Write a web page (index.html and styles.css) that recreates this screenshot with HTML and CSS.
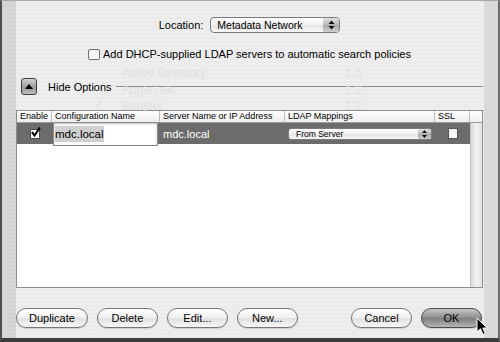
FILE: index.html
```html
<!DOCTYPE html>
<html lang="en">
<head>
    <meta charset="UTF-8">
    <title>LDAP Options</title>
    <link rel="stylesheet" href="styles.css">
</head>
<body>
    <div class="window">
        <!-- faint list of the window behind the sheet -->
        <div class="ghost">
            <span class="ghost-item g1">Active Directory</span><span class="ghost-ver g1">1.5</span>
            <span class="ghost-item g2">AppleTalk</span><span class="ghost-ver g2">1.2</span>
            <span class="ghost-check">&#10003;</span>
            <span class="ghost-item g3">Bonjour</span><span class="ghost-ver g3">1.2</span>
        </div>

        <div class="location-row">
            <span class="label">Location:</span>
            <div class="popup location-popup">
                <span class="popup-text">Metadata Network</span>
                <span class="popup-arrows">
                    <svg width="7" height="10" viewBox="0 0 7 10"><path d="M3.5 0.5 L6.5 4 L0.5 4 Z M0.5 6 L6.5 6 L3.5 9.5 Z" fill="#111"/></svg>
                </span>
            </div>
        </div>

        <div class="dhcp-row">
            <span class="checkbox"></span>
            <span>Add DHCP-supplied LDAP servers to automatic search policies</span>
        </div>

        <div class="options-row">
            <span class="disclosure">
                <svg width="8" height="5" viewBox="0 0 8 5"><path d="M4 0 L8 5 L0 5 Z" fill="#000"/></svg>
            </span>
            <span class="options-label">Hide Options</span>
            <span class="rule"></span>
        </div>

        <div class="table">
            <div class="thead">
                <div class="th center">Enable</div>
                <div class="th">Configuration Name</div>
                <div class="th">Server Name or IP Address</div>
                <div class="th">LDAP Mappings</div>
                <div class="th">SSL</div>
                <div class="th corner"></div>
            </div>
            <div class="tbody">
                <div class="rows">
                    <div class="row selected">
                        <div class="td center">
                            <span class="small-check">
                                <svg width="11" height="11" viewBox="0 0 11 11"><path d="M2 5 L4.5 8.5 L10 0.5" fill="none" stroke="#000" stroke-width="2"/></svg>
                            </span>
                        </div>
                        <div class="td">
                            <div class="edit-field"><span class="selection">mdc.local</span></div>
                        </div>
                        <div class="td server">mdc.local</div>
                        <div class="td">
                            <div class="popup mini-popup">
                                <span class="popup-text">From Server</span>
                                <span class="popup-arrows">
                                    <svg width="5" height="8" viewBox="0 0 5 8"><path d="M2.5 0 L5 3 L0 3 Z M0 5 L5 5 L2.5 8 Z" fill="#111"/></svg>
                                </span>
                            </div>
                        </div>
                        <div class="td center"><span class="small-box"></span></div>
                    </div>
                </div>
                <div class="scroll-track"></div>
            </div>
        </div>

        <div class="buttons">
            <button class="btn">Duplicate</button>
            <button class="btn">Delete</button>
            <button class="btn">Edit...</button>
            <button class="btn">New...</button>
            <span class="spacer"></span>
            <button class="btn">Cancel</button>
            <button class="btn default">OK</button>
        </div>

        <svg class="cursor" width="13" height="19" viewBox="0 0 13 19">
            <path d="M1 1 L1 15 L4.5 11.8 L7 17.5 L9.3 16.5 L6.8 11 L11.2 11 Z" fill="#000" stroke="#fff" stroke-width="1"/>
        </svg>
    </div>
</body>
</html>
```
FILE: styles.css
```css
body {
    margin: 0;
    font-family: "Liberation Sans", Arial, sans-serif;
    color: #000;
    background: #ececec;
}

.window {
    position: relative;
    box-sizing: border-box;
    width: 500px;
    height: 342px;
    overflow: hidden;
    border-top: 1px solid #a8a8a8;
    border-left: 2px solid #4e4e4e;
    border-right: 2px solid #6a6a6a;
    border-bottom: 4px solid #3c3c3c;
    padding: 0 15px 0 14px;
    background:
        linear-gradient(to right, rgba(0,0,0,0.1) 0 14px, transparent 14px calc(100% - 14px), rgba(0,0,0,0.08) calc(100% - 14px)),
        repeating-linear-gradient(#ebebeb 0 2px, #eeeeee 2px 4px);
}

/* window behind */
.ghost {
    color: #e0e0e0;
    font-size: 12px;
}

.ghost span {
    position: absolute;
}

.ghost-item { left: 120px; }
.ghost-ver { left: 343px; }
.g1 { top: 65px; }
.g2 { top: 82px; }
.g3 { top: 98px; }

.ghost-check {
    left: 92px;
    top: 96px;
}

/* location */
.location-row {
    display: flex;
    justify-content: center;
    align-items: center;
    gap: 7px;
    padding-top: 16px;
    font-size: 11px;
}

.popup {
    display: flex;
    align-items: stretch;
    box-sizing: border-box;
    border: 1px solid #7b7b7b;
    border-radius: 4px;
    background: linear-gradient(#ffffff, #f1f1f1 50%, #e4e4e4 51%, #f7f7f7);
    overflow: hidden;
}

.popup-text {
    flex: 1;
    display: flex;
    align-items: center;
}

.popup-arrows {
    display: flex;
    align-items: center;
    justify-content: center;
    background: linear-gradient(#e2e2e2, #b8b8b8 50%, #a6a6a6 51%, #d0d0d0);
}

.location-popup {
    width: 130px;
    height: 16px;
    font-size: 10.5px;
}

.location-popup .popup-text {
    padding-left: 6px;
}

.location-popup .popup-arrows {
    width: 16px;
}

/* dhcp */
.dhcp-row {
    display: flex;
    justify-content: center;
    align-items: center;
    gap: 3px;
    margin-top: 15px;
    height: 12px;
    font-size: 11px;
}

.checkbox {
    box-sizing: border-box;
    width: 12px;
    height: 11px;
    border: 1px solid #6e6e6e;
    border-radius: 2px;
    background: linear-gradient(#f4f4f4, #ffffff);
}

/* options */
.options-row {
    display: flex;
    align-items: center;
    margin-top: 18px;
    padding-left: 5px;
    height: 17px;
    font-size: 11px;
}

.disclosure {
    box-sizing: border-box;
    width: 16px;
    height: 17px;
    display: flex;
    align-items: center;
    justify-content: center;
    border: 1px solid #3e3e3e;
    border-radius: 3px;
    background: linear-gradient(#d2d2d2, #a2a2a2 50%, #959595 51%, #bdbdbd);
}

.options-label {
    margin-left: 11px;
}

.rule {
    flex: 1;
    margin-left: 4px;
    border-top: 1px solid #8c8c8c;
}

/* table */
.table {
    display: flex;
    flex-direction: column;
    box-sizing: border-box;
    height: 178px;
    margin-top: 15px;
    border: 1px solid #8e8e8e;
    background: #fff;
}

.thead {
    display: grid;
    grid-template-columns: 35px 108px 125px 150px 35px 12px;
    height: 11px;
    border-bottom: 1px solid #9c9c9c;
    background: linear-gradient(#ffffff, #eeeeee);
}

.th {
    box-sizing: border-box;
    padding: 0 3px;
    font-size: 9px;
    line-height: 11px;
    white-space: nowrap;
    overflow: hidden;
    border-right: 1px solid #bcbcbc;
}

.th.corner {
    border-right: none;
}

.center {
    text-align: center;
    justify-content: center;
}

.tbody {
    flex: 1;
    display: flex;
}

.rows {
    flex: 1;
}

.row {
    display: grid;
    grid-template-columns: 35px 108px 125px 150px 35px;
    height: 21px;
}

.row.selected {
    background: #6c6c6c;
}

.td {
    display: flex;
    align-items: center;
    min-width: 0;
}

.small-check {
    position: relative;
    box-sizing: border-box;
    width: 10px;
    height: 10px;
    border: 1px solid #4a4a4a;
    background: #fff;
}

.small-check svg {
    position: absolute;
    left: -1px;
    top: -3px;
}

.edit-field {
    box-sizing: border-box;
    flex: 1;
    height: 24px;
    margin: -1px 2px -2px 1px;
    padding-left: 1px;
    display: flex;
    align-items: center;
    border: 1px solid #8a8a8a;
    box-shadow: inset 0 1px 2px rgba(0,0,0,0.25);
    background: #fff;
    font-size: 11.5px;
}

.selection {
    background: #cfcfcf;
    line-height: 16px;
}

.server {
    padding-left: 3px;
    color: #fff;
    font-size: 11px;
}

.mini-popup {
    flex: 1;
    height: 12px;
    margin: 0 3px;
    border-radius: 3px;
    font-size: 8.5px;
}

.mini-popup .popup-text {
    padding-left: 7px;
}

.mini-popup .popup-arrows {
    width: 13px;
}

.small-box {
    box-sizing: border-box;
    width: 10px;
    height: 11px;
    border: 1px solid #555;
    background: linear-gradient(#eeeeee, #ffffff);
}

.scroll-track {
    width: 12px;
    background: linear-gradient(to right, #d8d8d8, #f3f3f3 45%, #e4e4e4);
    border-left: 1px solid #c4c4c4;
}

/* buttons */
.buttons {
    display: flex;
    align-items: center;
    gap: 9px;
    margin-top: 20px;
    margin-right: 1px;
}

.spacer {
    flex: 1;
}

.btn {
    box-sizing: border-box;
    height: 20px;
    min-width: 61px;
    padding: 0 12px;
    border: 1px solid #767676;
    border-radius: 10px;
    font-family: "Liberation Sans", Arial, sans-serif;
    font-size: 11px;
    color: #000;
    background: linear-gradient(#ffffff, #f0f0f0 50%, #e0e0e0 51%, #f8f8f8);
    box-shadow: 0 1px 1px rgba(0,0,0,0.15);
}

.btn.default {
    border-color: #4a4a4a;
    background: linear-gradient(#c6c6c6, #8c8c8c 50%, #7c7c7c 51%, #b6b6b6);
}

.cursor {
    position: absolute;
    left: 474px;
    top: 316px;
}
```
